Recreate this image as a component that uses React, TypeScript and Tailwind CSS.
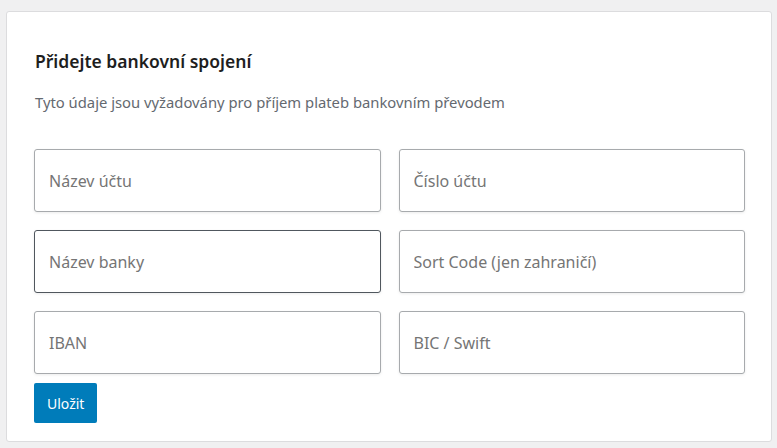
export default function App() {
  const fields = [
    { label: 'Název účtu', dark: false },
    { label: 'Číslo účtu', dark: false },
    { label: 'Název banky', dark: true },
    { label: 'Sort Code (jen zahraničí)', dark: false },
    { label: 'IBAN', dark: false },
    { label: 'BIC / Swift', dark: false },
  ];

  return (
    <div className="min-h-[448px] bg-[#f0f0f1] pt-[11px] pl-[6px] pr-[5px] font-['Noto_Sans',sans-serif]">
      <div className="h-[431px] rounded-[3px] border border-[#dcdcde] bg-white pl-[27px] pr-[26px] pt-[37px]">
        <h2 className="pl-px text-[17.5px] font-semibold leading-[24px] text-[#1e1e1e]">Přidejte bankovní spojení</h2>
        <p className="mt-[19px] pl-px text-[14.8px] leading-[20px] text-[#646970]">
          Tyto údaje jsou vyžadovány pro příjem plateb bankovním převodem
        </p>
        <div className="mt-[37px] grid grid-cols-2 gap-x-[18px] gap-y-[18px]">
          {fields.map((f) => (
            <input
              key={f.label}
              placeholder={f.label}
              className={
                'h-[63px] w-full rounded-[3px] border bg-white px-[14px] text-[16px] text-[#1e1e1e] placeholder:text-[#757575] shadow-[0_1px_3px_rgba(0,0,0,0.08)] outline-none ' +
                (f.dark ? 'border-[#50575e]' : 'border-[#a7aaad]')
              }
            />
          ))}
        </div>
        <button className="mt-[9px] h-[40px] rounded-[2px] bg-[#007cba] px-[13px] text-[14px] text-white">
          Uložit
        </button>
      </div>
    </div>
  );
}
